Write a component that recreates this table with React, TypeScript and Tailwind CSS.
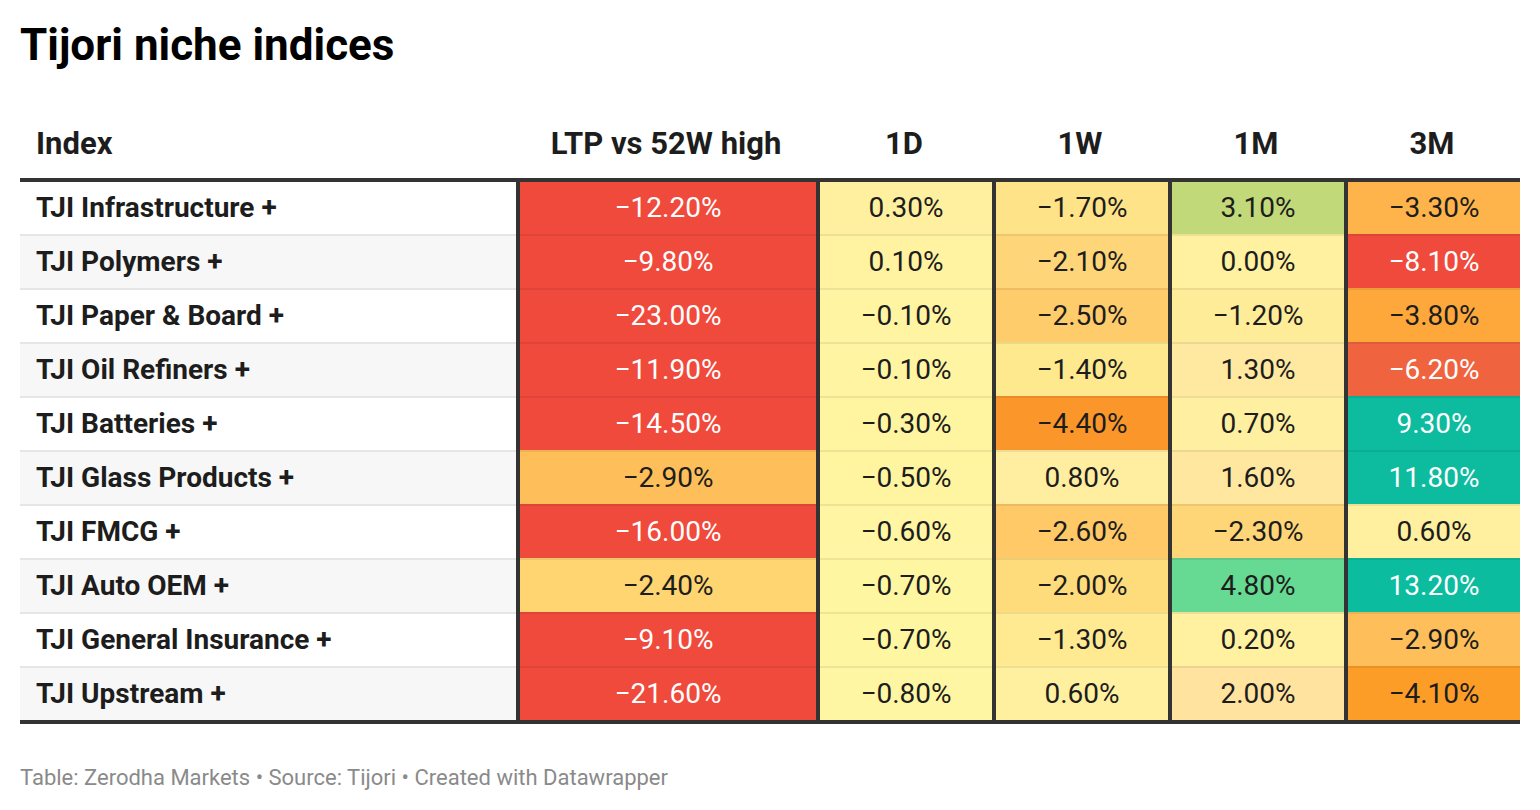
import React from "react";

type Cell = { v: string; bg: string; light?: boolean };
type Row = { name: string; cells: Cell[] };

const RED = "bg-[#ef4a3c]";
const TEAL = "bg-[#0dbb9e]";

const rows: Row[] = [
  {
    name: "TJI Infrastructure +",
    cells: [
      { v: "−12.20%", bg: RED, light: true },
      { v: "0.30%", bg: "bg-[#fff0a0]" },
      { v: "−1.70%", bg: "bg-[#ffe388]" },
      { v: "3.10%", bg: "bg-[#c2d979]" },
      { v: "−3.30%", bg: "bg-[#feb44a]" },
    ],
  },
  {
    name: "TJI Polymers +",
    cells: [
      { v: "−9.80%", bg: RED, light: true },
      { v: "0.10%", bg: "bg-[#fff2a1]" },
      { v: "−2.10%", bg: "bg-[#fed679]" },
      { v: "0.00%", bg: "bg-[#fff1a0]" },
      { v: "−8.10%", bg: RED, light: true },
    ],
  },
  {
    name: "TJI Paper & Board +",
    cells: [
      { v: "−23.00%", bg: RED, light: true },
      { v: "−0.10%", bg: "bg-[#fff4a2]" },
      { v: "−2.50%", bg: "bg-[#fecc6b]" },
      { v: "−1.20%", bg: "bg-[#ffec98]" },
      { v: "−3.80%", bg: "bg-[#fea83c]" },
    ],
  },
  {
    name: "TJI Oil Refiners +",
    cells: [
      { v: "−11.90%", bg: RED, light: true },
      { v: "−0.10%", bg: "bg-[#fff4a2]" },
      { v: "−1.40%", bg: "bg-[#ffe98f]" },
      { v: "1.30%", bg: "bg-[#ffe8a0]" },
      { v: "−6.20%", bg: "bg-[#f0633f]", light: true },
    ],
  },
  {
    name: "TJI Batteries +",
    cells: [
      { v: "−14.50%", bg: RED, light: true },
      { v: "−0.30%", bg: "bg-[#fff5a1]" },
      { v: "−4.40%", bg: "bg-[#fb962b]" },
      { v: "0.70%", bg: "bg-[#ffefa0]" },
      { v: "9.30%", bg: TEAL, light: true },
    ],
  },
  {
    name: "TJI Glass Products +",
    cells: [
      { v: "−2.90%", bg: "bg-[#febf5a]" },
      { v: "−0.50%", bg: "bg-[#fff5a1]" },
      { v: "0.80%", bg: "bg-[#ffeea0]" },
      { v: "1.60%", bg: "bg-[#ffe7a0]" },
      { v: "11.80%", bg: TEAL, light: true },
    ],
  },
  {
    name: "TJI FMCG +",
    cells: [
      { v: "−16.00%", bg: RED, light: true },
      { v: "−0.60%", bg: "bg-[#fff5a2]" },
      { v: "−2.60%", bg: "bg-[#fec966]" },
      { v: "−2.30%", bg: "bg-[#fed677]" },
      { v: "0.60%", bg: "bg-[#fff0a0]" },
    ],
  },
  {
    name: "TJI Auto OEM +",
    cells: [
      { v: "−2.40%", bg: "bg-[#fed571]" },
      { v: "−0.70%", bg: "bg-[#fff6a2]" },
      { v: "−2.00%", bg: "bg-[#fedb7b]" },
      { v: "4.80%", bg: "bg-[#66d993]" },
      { v: "13.20%", bg: "bg-[#0bbc9f]", light: true },
    ],
  },
  {
    name: "TJI General Insurance +",
    cells: [
      { v: "−9.10%", bg: RED, light: true },
      { v: "−0.70%", bg: "bg-[#fff6a2]" },
      { v: "−1.30%", bg: "bg-[#ffea92]" },
      { v: "0.20%", bg: "bg-[#fff1a0]" },
      { v: "−2.90%", bg: "bg-[#febf5a]" },
    ],
  },
  {
    name: "TJI Upstream +",
    cells: [
      { v: "−21.60%", bg: RED, light: true },
      { v: "−0.80%", bg: "bg-[#fff6a3]" },
      { v: "0.60%", bg: "bg-[#fff0a0]" },
      { v: "2.00%", bg: "bg-[#ffe39e]" },
      { v: "−4.10%", bg: "bg-[#fc9d28]" },
    ],
  },
];

const headers = ["LTP vs 52W high", "1D", "1W", "1M", "3M"];
const cols = "grid grid-cols-[496px_300px_176px_176px_176px_176px]";

export default function App() {
  return (
    <div className="min-h-screen bg-white font-[Roboto,sans-serif] text-[#1d1d1d]">
      <div className="w-[1500px] ml-[20px] pt-[23px]">
        <h1 className="text-[44px] leading-[44px] font-bold text-black">Tijori niche indices</h1>

        <div className="mt-[43px]">
          <div className={`${cols} h-[68px] items-center text-[31px] font-bold`}>
            <div className="pl-[16px]">Index</div>
            {headers.map((h) => (
              <div key={h} className="text-center">
                {h}
              </div>
            ))}
          </div>

          <div className="border-t-4 border-b-4 border-[#333333]">
            {rows.map((row, r) => (
              <div key={row.name} className={`${cols} text-[28px]`}>
                <div
                  className={`h-full flex items-center pl-[16px] font-bold ${
                    r % 2 === 1 ? "bg-[#f7f7f7]" : "bg-white"
                  } ${r > 0 ? "border-t-2 border-[#e6e6e6]" : ""}`}
                >
                  <div className="h-[52px] flex items-center">{row.name}</div>
                </div>
                {row.cells.map((c, i) => (
                  <div
                    key={i}
                    className={`border-l-4 border-l-[#333333] ${c.bg} ${
                      c.light ? "text-white" : "text-[#1d1d1d]"
                    }`}
                  >
                    {r > 0 && <div className="h-[2px] bg-black/[0.07]" />}
                    <div className="h-[52px] flex items-center justify-center">{c.v}</div>
                  </div>
                ))}
              </div>
            ))}
          </div>
        </div>

        <p className="mt-[37px] text-[22px] text-[#8a8a8a]">
          Table: Zerodha Markets • Source: Tijori • Created with Datawrapper
        </p>
      </div>
    </div>
  );
}
